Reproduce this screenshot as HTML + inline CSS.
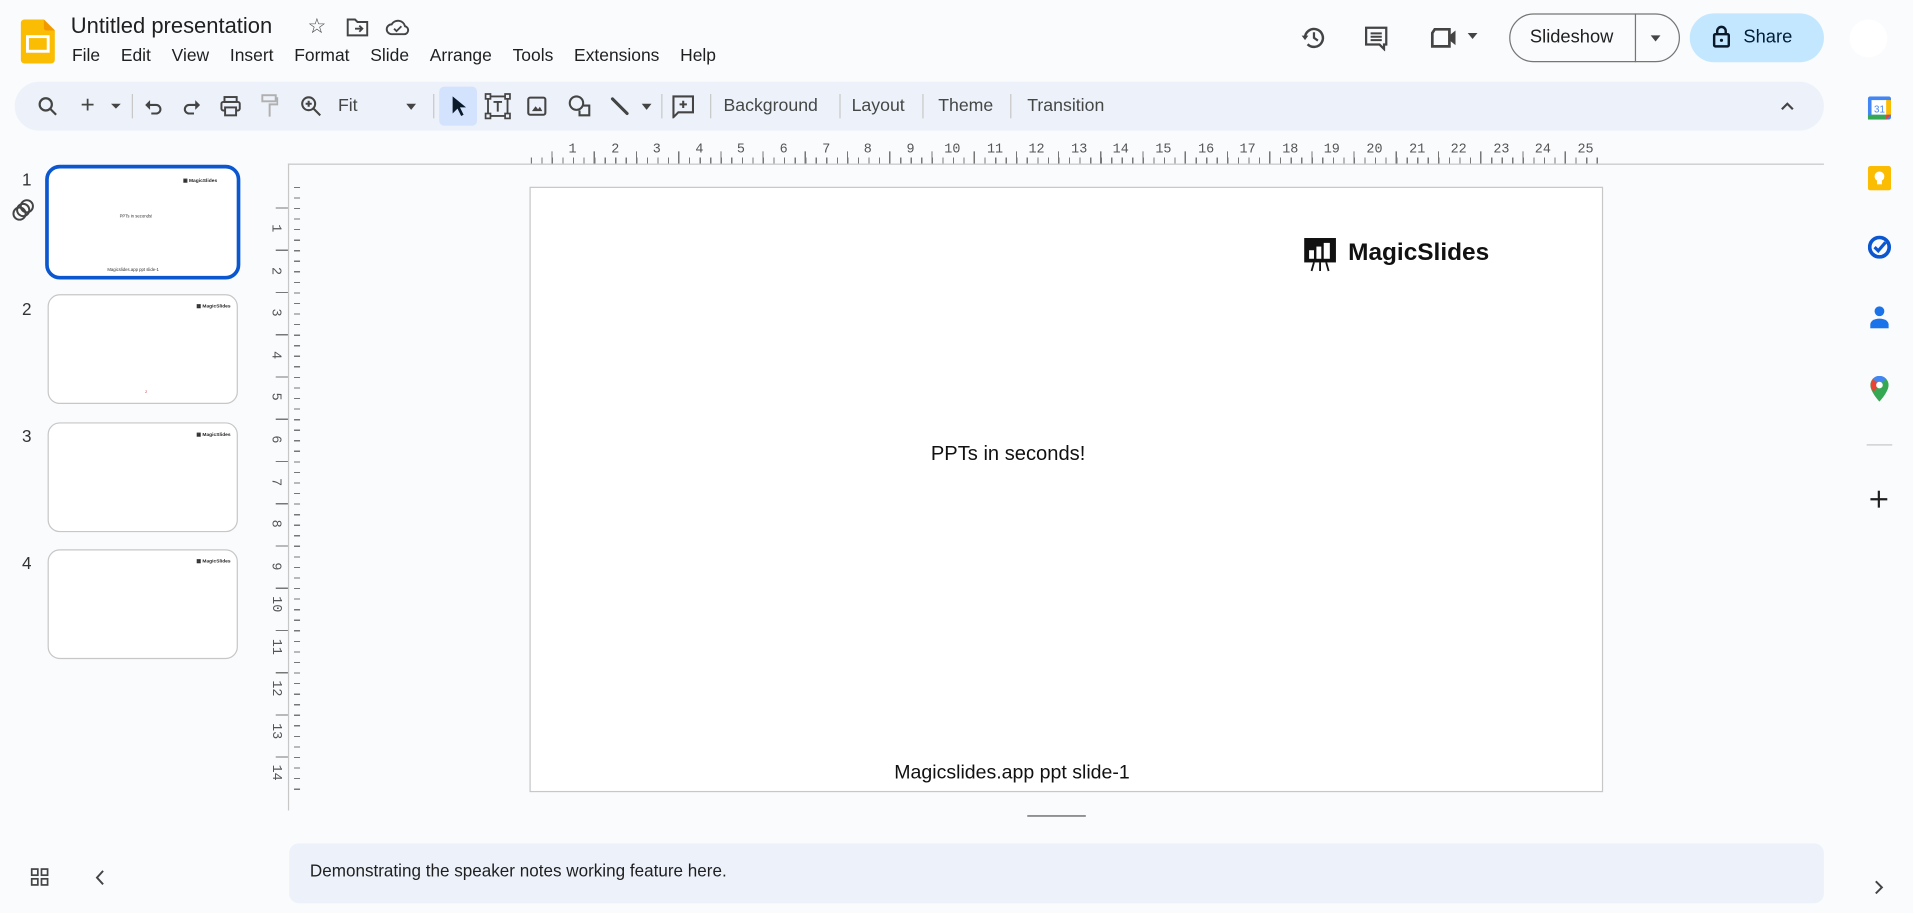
<!DOCTYPE html>
<html><head><meta charset="utf-8">
<style>
*{box-sizing:border-box;margin:0;padding:0}
html,body{width:1913px;height:913px;overflow:hidden;background:#f9fbfd}
#w{position:absolute;left:0;top:0;width:1568px;height:748px;transform:scale(1.22003,1.2206);transform-origin:0 0;font-family:"Liberation Sans",Arial,sans-serif;color:#1f1f1f;background:#f9fbfd}
.a{position:absolute}
.menu span{margin-right:17px}
.tb{position:absolute;left:12px;top:67px;width:1483px;height:40px;background:#edf2fa;border-radius:20px}
.tb .t{position:absolute;top:12px;font-size:14.5px;color:#444746}
.sep{position:absolute;top:10px;width:1px;height:20px;background:#c7c7c7}
.thumb{position:absolute;left:39px;width:156px;height:90px;background:#fff;border:1px solid #c7c7c7;border-radius:10px}
.num{position:absolute;left:18px;font-size:14px;color:#333}
.ml{position:absolute;font-size:4px;font-weight:bold}
svg{position:absolute}
.rn{position:absolute;font-family:"Liberation Mono",monospace;font-size:11px;color:#555}
</style></head><body><div id="w">
<svg style="left:17px;top:16px" width="28" height="36" viewBox="0 0 28 36"><path d="M3 0h16l9 9v24a3 3 0 0 1-3 3H3a3 3 0 0 1-3-3V3a3 3 0 0 1 3-3z" fill="#fbbc04"/><path d="M19 0l9 9h-7a2 2 0 0 1-2-2z" fill="#f29900"/><rect x="5.5" y="14" width="17" height="12" fill="none" stroke="#fff" stroke-width="2.4"/></svg>
<div class="a" style="left:58px;top:11px;font-size:18px;color:#1f1f1f">Untitled presentation</div>
<div class="a" style="left:252px;top:12px;font-size:17px;color:#444">☆</div>
<svg style="left:284px;top:14px" width="18" height="16" viewBox="0 0 18 16"><path d="M1 2h6l2 2h8v11H1z" fill="none" stroke="#444" stroke-width="1.6"/><path d="M7 9.5h6M10.5 7l2.5 2.5-2.5 2.5" fill="none" stroke="#444" stroke-width="1.5"/></svg>
<svg style="left:316px;top:14px" width="20" height="16" viewBox="0 0 20 16"><path d="M5 14a4 4 0 0 1 0-8 6 6 0 0 1 11 1.5A3.3 3.3 0 0 1 15.5 14z" fill="none" stroke="#444" stroke-width="1.6"/><path d="M7 9.5l2 2 4-4" fill="none" stroke="#444" stroke-width="1.5"/></svg>
<div class="a menu" style="left:59px;top:38px;font-size:14.3px;color:#1f1f1f"><span>File</span><span>Edit</span><span>View</span><span>Insert</span><span>Format</span><span>Slide</span><span>Arrange</span><span>Tools</span><span>Extensions</span><span>Help</span></div>
<svg style="left:1066px;top:20px" width="22" height="22" viewBox="0 0 24 24"><path d="M4 12a8 8 0 1 1 2.3 5.7" fill="none" stroke="#444" stroke-width="2.2"/><path d="M1 10l3 4 3-4z" fill="#444"/><path d="M12 7v5l3.5 2.5" fill="none" stroke="#444" stroke-width="2"/></svg>
<svg style="left:1117px;top:20px" width="22" height="22" viewBox="0 0 24 24"><path d="M3 3h18v15h-2v4l-4-4H3z" fill="none" stroke="#444" stroke-width="2"/><path d="M7 8h10M7 11h10M7 14h10" stroke="#444" stroke-width="1.8"/></svg>
<svg style="left:1172px;top:21px" width="26" height="20" viewBox="0 0 26 20"><path d="M4 3h12v14H2V6z" fill="none" stroke="#444" stroke-width="2.2"/><path d="M16 8l5-4v12l-5-4z" fill="#444"/></svg>
<div class="a" style="left:1203px;top:27px;width:0;height:0;border-left:4.5px solid transparent;border-right:4.5px solid transparent;border-top:5px solid #444"></div>
<div class="a" style="left:1237px;top:11px;width:140px;height:40px;border:1px solid #747775;border-radius:20px"></div>
<div class="a" style="left:1340px;top:11px;width:1px;height:40px;background:#747775"></div>
<div class="a" style="left:1254px;top:22px;font-size:15px;color:#1f1f1f">Slideshow</div>
<div class="a" style="left:1353px;top:29px;width:0;height:0;border-left:4.5px solid transparent;border-right:4.5px solid transparent;border-top:5px solid #444"></div>
<div class="a" style="left:1385px;top:11px;width:110px;height:40px;background:#c2e7ff;border-radius:20px"></div>
<svg style="left:1403px;top:20px" width="16" height="20" viewBox="0 0 16 20"><rect x="2" y="8" width="12" height="10" rx="1" fill="none" stroke="#0b1a2a" stroke-width="2"/><path d="M4.5 8V5.5a3.5 3.5 0 0 1 7 0V8" fill="none" stroke="#0b1a2a" stroke-width="2"/><circle cx="8" cy="13" r="1.3" fill="#0b1a2a"/></svg>
<div class="a" style="left:1429px;top:22px;font-size:15px;color:#001d35">Share</div>
<div class="a" style="left:1516px;top:16px;width:31px;height:31px;border-radius:50%;background:#fff"></div>
<div class="tb">
<svg style="left:19px;top:12px" width="16" height="16" viewBox="0 0 16 16"><circle cx="6.5" cy="6.5" r="5" fill="none" stroke="#444" stroke-width="1.8"/><path d="M10 10l5 5" stroke="#444" stroke-width="1.8"/></svg>
<div class="t" style="left:54px;top:8px;font-size:20px">+</div>
<div class="a" style="left:79px;top:18px;border-left:4px solid transparent;border-right:4px solid transparent;border-top:4px solid #444"></div>
<div class="sep" style="left:96px"></div>
<svg style="left:106px;top:12px" width="16" height="16" viewBox="0 0 16 16"><path d="M4 7h6a3.5 3.5 0 0 1 0 7H6" fill="none" stroke="#444" stroke-width="1.7"/><path d="M1 7l4-4v8z" fill="#444"/></svg>
<svg style="left:137px;top:12px" width="16" height="16" viewBox="0 0 16 16"><path d="M12 7H6a3.5 3.5 0 0 0 0 7h4" fill="none" stroke="#444" stroke-width="1.7"/><path d="M15 7l-4-4v8z" fill="#444"/></svg>
<svg style="left:168px;top:11px" width="18" height="18" viewBox="0 0 18 18"><rect x="4" y="1.5" width="10" height="4" fill="none" stroke="#444" stroke-width="1.6"/><rect x="1.5" y="5.5" width="15" height="7" rx="1.5" fill="none" stroke="#444" stroke-width="1.6"/><rect x="4.5" y="10" width="9" height="6.5" fill="#edf2fa" stroke="#444" stroke-width="1.6"/></svg>
<svg style="left:202px;top:10px" width="14" height="20" viewBox="0 0 14 20"><rect x="1" y="1" width="11" height="5" fill="none" stroke="#b0b0b0" stroke-width="1.6"/><path d="M12 3.5h1.5v5H7v10" fill="none" stroke="#b0b0b0" stroke-width="1.6"/></svg>
<svg style="left:234px;top:11px" width="18" height="18" viewBox="0 0 18 18"><circle cx="7" cy="7" r="5.3" fill="none" stroke="#444" stroke-width="1.7"/><path d="M11 11l5.5 5.5M4.5 7h5M7 4.5v5" stroke="#444" stroke-width="1.7"/></svg>
<div class="t" style="left:265px">Fit</div>
<div class="a" style="left:321px;top:18px;border-left:4.5px solid transparent;border-right:4.5px solid transparent;border-top:5px solid #444"></div>
<div class="sep" style="left:343px"></div>
<div class="a" style="left:348px;top:4px;width:31px;height:32px;background:#d3e3fd;border-radius:4px"></div>
<svg style="left:356px;top:11px" width="16" height="18" viewBox="0 0 16 18"><path d="M3 1v14l4-4 3 6 2-1-3-6h5z" fill="#0b1a2a"/></svg>
<svg style="left:385px;top:9px" width="22" height="22" viewBox="0 0 22 22"><rect x="3" y="3" width="16" height="16" fill="none" stroke="#444" stroke-width="1.5"/><rect x="1" y="1" width="4" height="4" fill="#edf2fa" stroke="#444" stroke-width="1.4"/><rect x="17" y="1" width="4" height="4" fill="#edf2fa" stroke="#444" stroke-width="1.4"/><rect x="1" y="17" width="4" height="4" fill="#edf2fa" stroke="#444" stroke-width="1.4"/><rect x="17" y="17" width="4" height="4" fill="#edf2fa" stroke="#444" stroke-width="1.4"/><path d="M7.5 7.5h7M11 7.5v8" stroke="#444" stroke-width="1.6"/></svg>
<svg style="left:419px;top:11px" width="18" height="18" viewBox="0 0 18 18"><rect x="2" y="2" width="14" height="14" rx="1.5" fill="none" stroke="#444" stroke-width="1.7"/><path d="M5 13l3-4 2 2.5 1.5-2 2 3.5z" fill="#444"/></svg>
<svg style="left:453px;top:10px" width="20" height="20" viewBox="0 0 20 20"><circle cx="7.5" cy="7.5" r="5.5" fill="none" stroke="#444" stroke-width="1.7"/><path d="M13 9.5h5v8h-8v-4" fill="none" stroke="#444" stroke-width="1.7"/></svg>
<svg style="left:487px;top:11px" width="18" height="18" viewBox="0 0 18 18"><path d="M3 3l12 12" stroke="#444" stroke-width="2.5" stroke-linecap="round"/></svg>
<div class="a" style="left:514px;top:18px;border-left:4.5px solid transparent;border-right:4.5px solid transparent;border-top:5px solid #444"></div>
<div class="sep" style="left:530px"></div>
<svg style="left:538px;top:10px" width="20" height="20" viewBox="0 0 20 20"><path d="M2 2h16v13H6l-4 4z" fill="none" stroke="#444" stroke-width="1.7"/><path d="M10 5.5v6M7 8.5h6" stroke="#444" stroke-width="1.7"/></svg>
<div class="sep" style="left:570px"></div>
<div class="t" style="left:581px">Background</div>
<div class="sep" style="left:676px"></div>
<div class="t" style="left:686px">Layout</div>
<div class="sep" style="left:744px"></div>
<div class="t" style="left:757px">Theme</div>
<div class="sep" style="left:816px"></div>
<div class="t" style="left:830px">Transition</div>
<svg style="left:1447px;top:15px" width="12" height="10" viewBox="0 0 12 10"><path d="M1.5 7.5L6 3l4.5 4.5" fill="none" stroke="#444" stroke-width="1.8"/></svg>
</div>
<div class="num" style="top:139px">1</div>
<svg style="left:9px;top:162px" width="20" height="20" viewBox="0 0 20 20"><circle cx="7" cy="13" r="5" fill="none" stroke="#444" stroke-width="1.6"/><circle cx="10" cy="10" r="5" fill="none" stroke="#444" stroke-width="1.6"/><circle cx="13" cy="7" r="5" fill="none" stroke="#444" stroke-width="1.6"/></svg>
<div class="thumb" style="top:135px;left:37px;width:160px;height:94px;border:3px solid #0b57d0;border-radius:12px">
<div class="ml" style="left:110px;top:7px">▦ MagicSlides</div>
<div class="a" style="left:58px;top:37px;font-size:3.5px;color:#333">PPTs in seconds!</div>
<div class="a" style="left:48px;top:81px;font-size:3.5px;color:#333">Magicslides.app ppt slide-1</div>
</div>
<div class="num" style="top:245px">2</div>
<div class="thumb" style="top:241px"><div class="ml" style="left:121px;top:6px">▦ MagicSlides</div><div class="a" style="left:79px;top:77px;font-size:3px;color:#c33">2</div></div>
<div class="num" style="top:349px">3</div>
<div class="thumb" style="top:346px"><div class="ml" style="left:121px;top:6px">▦ MagicSlides</div></div>
<div class="num" style="top:453px">4</div>
<div class="thumb" style="top:450px"><div class="ml" style="left:121px;top:6px">▦ MagicSlides</div></div>
<svg style="left:25px;top:711px" width="15" height="15" viewBox="0 0 15 15"><g fill="none" stroke="#444" stroke-width="1.4"><rect x="1" y="1" width="5" height="5"/><rect x="9" y="1" width="5" height="5"/><rect x="1" y="9" width="5" height="5"/><rect x="9" y="9" width="5" height="5"/></g></svg>
<svg style="left:77px;top:712px" width="10" height="14" viewBox="0 0 10 14"><path d="M7.5 1.5L2.5 7l5 5.5" fill="none" stroke="#444" stroke-width="1.6"/></svg>
<div class="a" style="left:236px;top:134px;width:1259px;height:1px;background:#c7c7c7"></div>
<div class="a" style="left:236px;top:134px;width:1px;height:530px;background:#c7c7c7"></div>
<div class="a" style="left:435px;top:124px;width:878px;height:10px;background:repeating-linear-gradient(90deg,#777 0 1px,transparent 1px 8.65px);clip-path:inset(5px 0 0 0)"></div>
<div class="a" style="left:452.3px;top:124px;width:861px;height:10px;background:repeating-linear-gradient(90deg,#777 0 1px,transparent 1px 34.6px)"></div>
<div class="a" style="left:236px;top:153px;width:10px;height:500px;background:repeating-linear-gradient(180deg,#777 0 1px,transparent 1px 8.65px);clip-path:inset(0 0 0 5px)"></div>
<div class="a" style="left:226px;top:170.3px;width:10px;height:483px;background:repeating-linear-gradient(180deg,#777 0 1px,transparent 1px 34.6px)"></div>
<div class="rn" style="left:466px;top:117px">1</div><div class="rn" style="left:501px;top:117px">2</div><div class="rn" style="left:535px;top:117px">3</div><div class="rn" style="left:570px;top:117px">4</div><div class="rn" style="left:604px;top:117px">5</div><div class="rn" style="left:639px;top:117px">6</div><div class="rn" style="left:674px;top:117px">7</div><div class="rn" style="left:708px;top:117px">8</div><div class="rn" style="left:743px;top:117px">9</div><div class="rn" style="left:774px;top:117px">10</div><div class="rn" style="left:809px;top:117px">11</div><div class="rn" style="left:843px;top:117px">12</div><div class="rn" style="left:878px;top:117px">13</div><div class="rn" style="left:912px;top:117px">14</div><div class="rn" style="left:947px;top:117px">15</div><div class="rn" style="left:982px;top:117px">16</div><div class="rn" style="left:1016px;top:117px">17</div><div class="rn" style="left:1051px;top:117px">18</div><div class="rn" style="left:1085px;top:117px">19</div><div class="rn" style="left:1120px;top:117px">20</div><div class="rn" style="left:1155px;top:117px">21</div><div class="rn" style="left:1189px;top:117px">22</div><div class="rn" style="left:1224px;top:117px">23</div><div class="rn" style="left:1258px;top:117px">24</div><div class="rn" style="left:1293px;top:117px">25</div>
<div style="position:absolute;left:222px;top:0;width:12px;height:700px;font-family:'Liberation Mono',monospace;font-size:11px;color:#555">
<div class="a" style="top:181px;transform:rotate(90deg)">1</div><div class="a" style="top:216px;transform:rotate(90deg)">2</div><div class="a" style="top:250px;transform:rotate(90deg)">3</div><div class="a" style="top:285px;transform:rotate(90deg)">4</div><div class="a" style="top:319px;transform:rotate(90deg)">5</div><div class="a" style="top:354px;transform:rotate(90deg)">6</div><div class="a" style="top:389px;transform:rotate(90deg)">7</div><div class="a" style="top:423px;transform:rotate(90deg)">8</div><div class="a" style="top:458px;transform:rotate(90deg)">9</div><div class="a" style="top:489px;left:-3px;transform:rotate(90deg)">10</div><div class="a" style="top:524px;left:-3px;transform:rotate(90deg)">11</div><div class="a" style="top:558px;left:-3px;transform:rotate(90deg)">12</div><div class="a" style="top:593px;left:-3px;transform:rotate(90deg)">13</div><div class="a" style="top:627px;left:-3px;transform:rotate(90deg)">14</div>
</div>
<div class="a" style="left:434px;top:153px;width:880px;height:496px;background:#fff;border:1px solid #c7c7c7">
<svg style="left:633px;top:40px" width="30" height="30" viewBox="0 0 30 30"><rect x="1" y="1" width="26" height="20" fill="#111"/><rect x="5" y="11" width="4" height="7" fill="#fff"/><rect x="11" y="8" width="4" height="10" fill="#fff"/><rect x="17" y="5" width="5" height="13" fill="#fff"/><path d="M9 21l-2 7M14 21v7M19 21l2 7" stroke="#111" stroke-width="1.5"/></svg>
<div class="a" style="left:670px;top:42px;font-size:20px;font-weight:bold;color:#111">MagicSlides</div>
<div class="a" style="left:328px;top:209px;font-size:16.5px;color:#111">PPTs in seconds!</div>
<div class="a" style="left:298px;top:471px;font-size:16px;color:#111">Magicslides.app ppt slide-1</div>
</div>
<div class="a" style="left:842px;top:668px;width:48px;height:1px;background:#555"></div>
<div class="a" style="left:237px;top:691px;width:1258px;height:49px;background:#edf2fa;border-radius:8px"></div>
<div class="a" style="left:254px;top:705px;font-size:14px;color:#1f1f1f">Demonstrating the speaker notes working feature here.</div>
<svg style="left:1531px;top:79px" width="19" height="19" viewBox="0 0 19 19"><rect x="0" y="0" width="19" height="19" rx="2" fill="#4285f4"/><rect x="3" y="3" width="13" height="12" fill="#fff"/><rect x="0" y="15" width="15" height="4" fill="#34a853"/><rect x="15" y="3" width="4" height="12" fill="#fbbc04"/><path d="M15 15h4l-4 4z" fill="#ea4335"/><text x="9.5" y="13" font-size="8" text-anchor="middle" fill="#4285f4" font-family="Liberation Sans">31</text></svg>
<svg style="left:1531px;top:136px" width="19" height="20" viewBox="0 0 19 20"><rect x="0" y="0" width="19" height="20" rx="2" fill="#fbbc04"/><circle cx="9.5" cy="8.5" r="4" fill="#fff"/><rect x="7.5" y="12" width="4" height="3" fill="#fff"/></svg>
<svg style="left:1531px;top:193px" width="19" height="19" viewBox="0 0 19 19"><circle cx="9.5" cy="9.5" r="8" fill="none" stroke="#0b57d0" stroke-width="3"/><path d="M5.5 9.5l3 3 6-7" fill="none" stroke="#0b57d0" stroke-width="2.6"/></svg>
<svg style="left:1532px;top:250px" width="17" height="19" viewBox="0 0 17 19"><circle cx="8.5" cy="5" r="4" fill="#1a73e8"/><path d="M1 19v-3c0-3 3-5 7.5-5S16 13 16 16v3z" fill="#1a73e8"/></svg>
<svg style="left:1533px;top:308px" width="15" height="21" viewBox="0 0 15 21"><path d="M7.5 0A7.5 7.5 0 0 0 0 7.5C0 13 7.5 21 7.5 21S15 13 15 7.5A7.5 7.5 0 0 0 7.5 0z" fill="#34a853"/><path d="M7.5 0A7.5 7.5 0 0 0 2 2.4l5.5 5.1 5.5-5.1A7.5 7.5 0 0 0 7.5 0z" fill="#4285f4"/><path d="M0 7.5l2-5.1 5.5 5.1L2.5 13z" fill="#ea4335"/><circle cx="7.5" cy="7.5" r="2.7" fill="#fff"/></svg>
<div class="a" style="left:1530px;top:364px;width:21px;height:1px;background:#c7c7c7"></div>
<svg style="left:1533px;top:402px" width="14" height="14" viewBox="0 0 14 14"><path d="M7 0v14M0 7h14" stroke="#1f1f1f" stroke-width="1.8"/></svg>
<svg style="left:1536px;top:721px" width="8" height="12" viewBox="0 0 8 12"><path d="M1.5 1l5 5-5 5" fill="none" stroke="#444" stroke-width="1.6"/></svg>
</div></body></html>
